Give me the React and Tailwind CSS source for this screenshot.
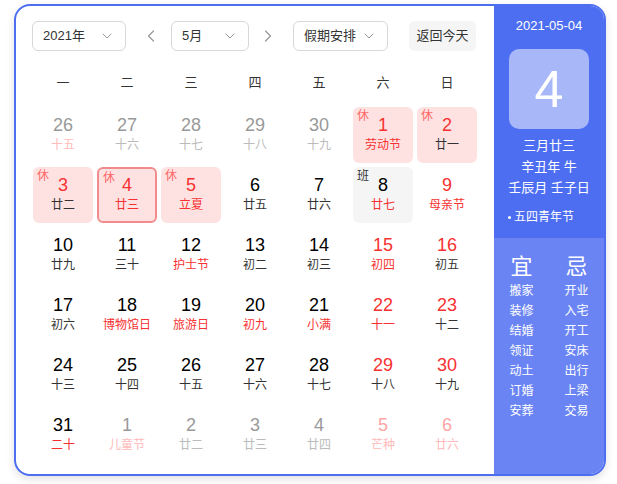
import { ChevronDown, ChevronLeft, ChevronRight } from 'lucide-react';

const FONT = { fontFamily: '"Liberation Sans", "Noto Sans CJK SC", sans-serif' };

// t: 'gray' | 'pink' | normal ; n: red number ; l: red lunar ; mark: 休/班
const DAYS = [
  { d: 26, lu: '十五', t: 'gray', lp: true },
  { d: 27, lu: '十六', t: 'gray' },
  { d: 28, lu: '十七', t: 'gray' },
  { d: 29, lu: '十八', t: 'gray' },
  { d: 30, lu: '十九', t: 'gray' },
  { d: 1, lu: '劳动节', n: true, l: true, mark: '休' },
  { d: 2, lu: '廿一', n: true, mark: '休' },
  { d: 3, lu: '廿二', n: true, mark: '休' },
  { d: 4, lu: '廿三', n: true, l: true, mark: '休', today: true },
  { d: 5, lu: '立夏', n: true, l: true, mark: '休' },
  { d: 6, lu: '廿五' },
  { d: 7, lu: '廿六' },
  { d: 8, lu: '廿七', l: true, mark: '班' },
  { d: 9, lu: '母亲节', n: true, l: true },
  { d: 10, lu: '廿九' },
  { d: 11, lu: '三十' },
  { d: 12, lu: '护士节', l: true },
  { d: 13, lu: '初二' },
  { d: 14, lu: '初三' },
  { d: 15, lu: '初四', n: true, l: true },
  { d: 16, lu: '初五', n: true },
  { d: 17, lu: '初六' },
  { d: 18, lu: '博物馆日', l: true },
  { d: 19, lu: '旅游日', l: true },
  { d: 20, lu: '初九', l: true },
  { d: 21, lu: '小满', l: true },
  { d: 22, lu: '十一', n: true, l: true },
  { d: 23, lu: '十二', n: true },
  { d: 24, lu: '十三' },
  { d: 25, lu: '十四' },
  { d: 26, lu: '十五' },
  { d: 27, lu: '十六' },
  { d: 28, lu: '十七' },
  { d: 29, lu: '十八', n: true },
  { d: 30, lu: '十九', n: true },
  { d: 31, lu: '二十', l: true },
  { d: 1, lu: '儿童节', t: 'gray', lp: true },
  { d: 2, lu: '廿二', t: 'gray' },
  { d: 3, lu: '廿三', t: 'gray' },
  { d: 4, lu: '廿四', t: 'gray' },
  { d: 5, lu: '芒种', t: 'pink' },
  { d: 6, lu: '廿六', t: 'pink' },
];

const WEEK = ['一', '二', '三', '四', '五', '六', '日'];
const YI = ['搬家', '装修', '结婚', '领证', '动土', '订婚', '安葬'];
const JI = ['开业', '入宅', '开工', '安床', '出行', '上梁', '交易'];

function Select({ label, width }) {
  return (
    <div
      className="h-[30px] flex items-center justify-between px-[10px] border border-[#d7d7dc] rounded-md text-[13px] text-[#333]"
      style={{ width }}
    >
      <span>{label}</span>
      <ChevronDown size={16} strokeWidth={1.5} className="text-[#999]" />
    </div>
  );
}

function DayCell({ day }) {
  let numColor = 'text-black';
  let luColor = 'text-[#333]';
  if (day.t === 'gray') {
    numColor = 'text-[#999]';
    luColor = day.lp ? 'text-[#fbb]' : 'text-[#bbb]';
  } else if (day.t === 'pink') {
    numColor = 'text-[#fca5a5]';
    luColor = 'text-[#fbb]';
  } else {
    if (day.n) numColor = 'text-[#f73131]';
    if (day.l) luColor = 'text-[#f73131]';
  }

  let box = '';
  if (day.mark === '休') box = 'bg-[#fee2e2]';
  if (day.mark === '班') box = 'bg-[#f5f5f6]';
  if (day.today) box = 'bg-[#fee2e2] border-2 border-[#f28b8b]';

  return (
    <div className="h-[60px] px-[2px] py-[2px]">
      <div className={`relative h-full rounded-md flex flex-col items-center pt-2 ${box}`}>
        {day.mark && (
          <span
            className={`absolute left-[4px] top-[1px] text-[12px] leading-4 ${
              day.mark === '休' ? 'text-[#f66]' : 'text-[#333]'
            } ${day.today ? 'left-[2px] top-[-1px]' : ''}`}
          >
            {day.mark}
          </span>
        )}
        <span className={`text-[18px] leading-5 ${numColor} ${day.today ? 'mt-[-2px]' : ''}`}>{day.d}</span>
        <span className={`text-[12px] leading-4 mt-[2px] ${luColor}`}>{day.lu}</span>
      </div>
    </div>
  );
}

export default function App() {
  return (
    <div className="w-[617px] h-[484px] bg-white pt-[4px] pl-[14px]" style={FONT}>
      <div className="w-[592px] h-[472px] flex border-2 border-[#4e6ef2] rounded-2xl overflow-hidden shadow-[0_3px_8px_rgba(0,0,0,0.12)]">
        {/* Left: calendar */}
        <div className="w-[478px] pl-[15px] pr-[15px] pt-[15px]">
          <div className="flex items-center">
            <div className="ml-[1px]">
              <Select label="2021年" width={94} />
            </div>
            <div className="ml-[12px] w-[26px] flex justify-center text-[#999]">
              <ChevronLeft size={20} strokeWidth={1.5} />
            </div>
            <div className="ml-[7px]">
              <Select label="5月" width={78} />
            </div>
            <div className="ml-[6px] w-[26px] flex justify-center text-[#999]">
              <ChevronRight size={20} strokeWidth={1.5} />
            </div>
            <div className="ml-[12px]">
              <Select label="假期安排" width={95} />
            </div>
            <div className="ml-[21px] w-[67px] h-[30px] rounded-md bg-[#f5f5f6] flex items-center justify-center text-[13px] text-[#333]">
              返回今天
            </div>
          </div>

          <div className="grid grid-cols-7 mt-[17px] h-[30px] items-center">
            {WEEK.map((w) => (
              <div key={w} className="text-center text-[13px] text-[#333]">
                {w}
              </div>
            ))}
          </div>

          <div className="grid grid-cols-7 mt-[7px]">
            {DAYS.map((day, i) => (
              <DayCell key={i} day={day} />
            ))}
          </div>
        </div>

        {/* Right: detail panel */}
        <div className="flex-1 flex flex-col text-white">
          <div className="bg-[#4e6ef2] h-[232px] flex flex-col items-center pt-[10px]">
            <div className="text-[13px] leading-5">2021-05-04</div>
            <div className="mt-[13px] w-[80px] h-[80px] rounded-[10px] bg-[#a8b7f8] flex items-center justify-center text-[52px] leading-none">
              4
            </div>
            <div className="mt-[7px] text-[13px] leading-5 text-center">
              <div>三月廿三</div>
              <div className="mt-[1px]">辛丑年 牛</div>
              <div className="mt-[1px]">壬辰月 壬子日</div>
            </div>
            <div className="self-start pl-[14px] mt-[11px] text-[12px] leading-4 flex items-center gap-[3px]">
              <span className="w-[3px] h-[3px] rounded-full bg-white" />
              <span>五四青年节</span>
            </div>
          </div>
          <div className="flex-1 bg-[#6a85f3] pt-[17px]">
            <div className="grid grid-cols-2 text-center">
              <div>
                <div className="text-[22px] leading-6">宜</div>
                <div className="mt-[2px]">
                  {YI.map((x) => (
                    <div key={x} className="text-[12px] leading-5">
                      {x}
                    </div>
                  ))}
                </div>
              </div>
              <div>
                <div className="text-[22px] leading-6">忌</div>
                <div className="mt-[2px]">
                  {JI.map((x) => (
                    <div key={x} className="text-[12px] leading-5">
                      {x}
                    </div>
                  ))}
                </div>
              </div>
            </div>
          </div>
        </div>
      </div>
    </div>
  );
}
